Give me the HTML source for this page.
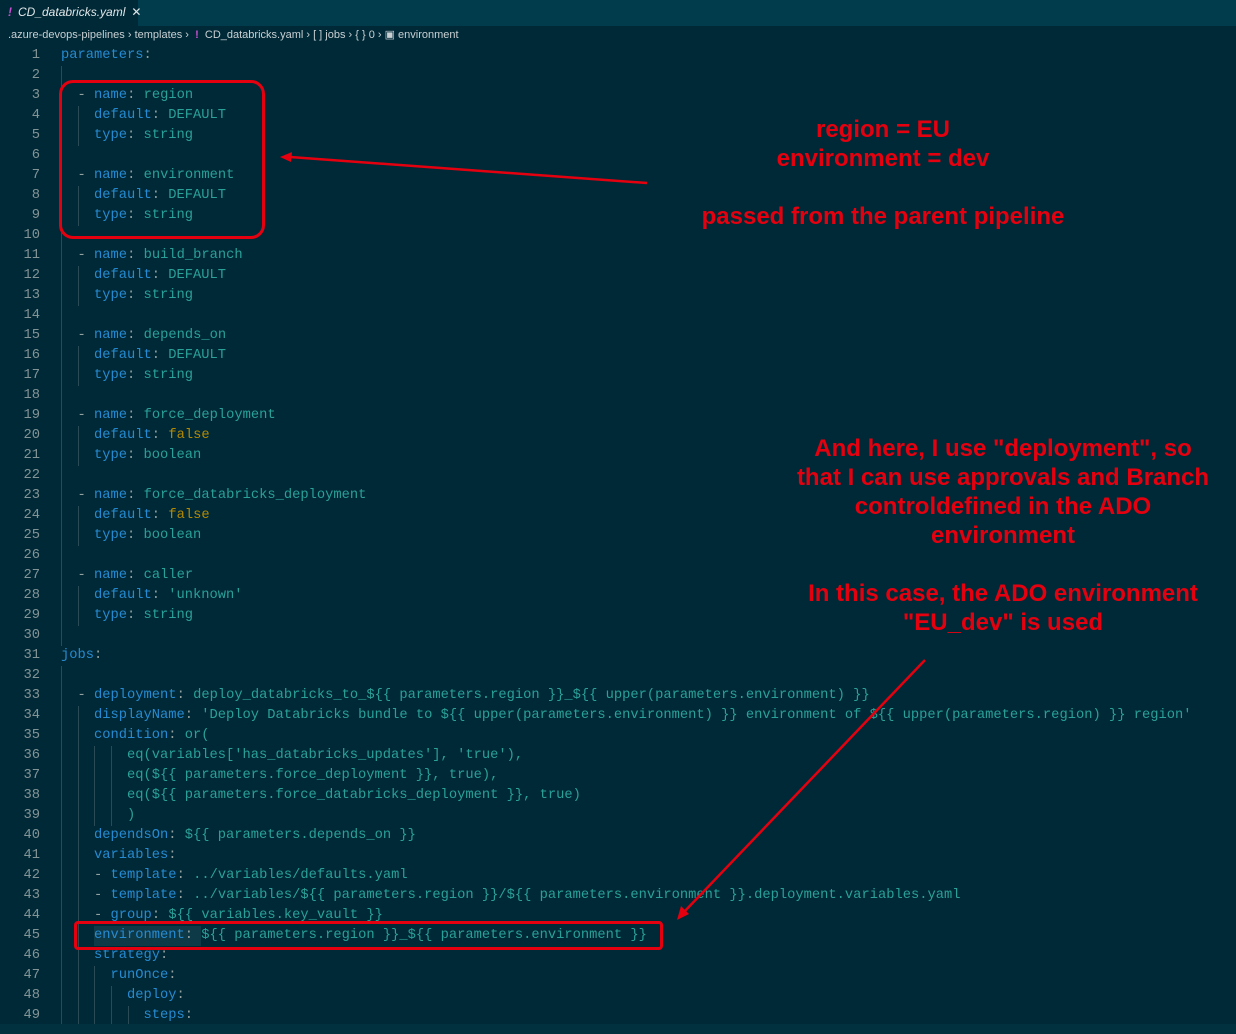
<!DOCTYPE html>
<html><head><meta charset="utf-8"><style>
body{margin:0;width:1236px;height:1034px;background:#002937;overflow:hidden;position:relative;font-family:"Liberation Mono",monospace}
.tabbar{position:absolute;left:0;top:0;width:1236px;height:26px;background:#003c4c}
.tab{position:absolute;left:0;top:0;width:138px;height:26px;background:#002937;font:italic 12px "Liberation Sans",sans-serif;color:#e0e6e8;line-height:25px;white-space:nowrap}
.bc{position:absolute;left:8px;top:27px;font:11px "Liberation Sans",sans-serif;color:#c8d0d3;line-height:16px;white-space:pre}
.ln{position:absolute;left:0;width:40px;text-align:right;color:#839496;font-size:13.8px;line-height:20px}
.cd{position:absolute;left:61px;white-space:pre;font-size:13.75px;line-height:20px;color:#2aa198}
.k{color:#268bd2}.p{color:#93a1a1}.y{color:#b58900}
.g{position:absolute;width:1px;background:#2a4a55}
.ann{position:absolute;color:#e4000f;font:bold 24px "Liberation Sans",sans-serif;text-align:center;line-height:29px;white-space:pre}
#c{position:absolute;left:0;top:2px;width:1236px;height:1022px}
</style></head><body>
<div class="tabbar"><div class="tab"><span style="color:#c84fd0;font-weight:bold;margin:0 6px 0 8px">!</span>CD_databricks.yaml<span style="font-style:normal;margin-left:6px">✕</span></div></div>
<div class="bc">.azure-devops-pipelines › templates ›  <span style="color:#c84fd0;font-weight:bold">!</span>  CD_databricks.yaml › [ ] jobs › { } 0 › ▣ environment</div>

<div id="c">
<div class="g" style="left:61px;top:64px;height:580px"></div>
<div class="g" style="left:61px;top:664px;height:360px"></div>
<div class="g" style="left:78px;top:104px;height:40px"></div>
<div class="g" style="left:78px;top:184px;height:40px"></div>
<div class="g" style="left:78px;top:264px;height:40px"></div>
<div class="g" style="left:78px;top:344px;height:40px"></div>
<div class="g" style="left:78px;top:424px;height:40px"></div>
<div class="g" style="left:78px;top:504px;height:40px"></div>
<div class="g" style="left:78px;top:584px;height:40px"></div>
<div class="g" style="left:78px;top:704px;height:320px"></div>
<div class="g" style="left:94px;top:744px;height:80px"></div>
<div class="g" style="left:94px;top:964px;height:60px"></div>
<div class="g" style="left:111px;top:744px;height:80px"></div>
<div class="g" style="left:111px;top:984px;height:40px"></div>
<div class="g" style="left:128px;top:1004px;height:20px"></div>
<div style="position:absolute;left:94px;top:924px;width:107px;height:20px;background:#0e3a48"></div>

<div class="ln" style="top:44px">1</div><div class="cd" style="top:44px"><span class="k">parameters</span><span class="p">:</span></div>
<div class="ln" style="top:64px">2</div>
<div class="ln" style="top:84px">3</div><div class="cd" style="top:84px">  <span class="p">-</span> <span class="k">name</span><span class="p">:</span> region</div>
<div class="ln" style="top:104px">4</div><div class="cd" style="top:104px">    <span class="k">default</span><span class="p">:</span> DEFAULT</div>
<div class="ln" style="top:124px">5</div><div class="cd" style="top:124px">    <span class="k">type</span><span class="p">:</span> string</div>
<div class="ln" style="top:144px">6</div>
<div class="ln" style="top:164px">7</div><div class="cd" style="top:164px">  <span class="p">-</span> <span class="k">name</span><span class="p">:</span> environment</div>
<div class="ln" style="top:184px">8</div><div class="cd" style="top:184px">    <span class="k">default</span><span class="p">:</span> DEFAULT</div>
<div class="ln" style="top:204px">9</div><div class="cd" style="top:204px">    <span class="k">type</span><span class="p">:</span> string</div>
<div class="ln" style="top:224px">10</div>
<div class="ln" style="top:244px">11</div><div class="cd" style="top:244px">  <span class="p">-</span> <span class="k">name</span><span class="p">:</span> build_branch</div>
<div class="ln" style="top:264px">12</div><div class="cd" style="top:264px">    <span class="k">default</span><span class="p">:</span> DEFAULT</div>
<div class="ln" style="top:284px">13</div><div class="cd" style="top:284px">    <span class="k">type</span><span class="p">:</span> string</div>
<div class="ln" style="top:304px">14</div>
<div class="ln" style="top:324px">15</div><div class="cd" style="top:324px">  <span class="p">-</span> <span class="k">name</span><span class="p">:</span> depends_on</div>
<div class="ln" style="top:344px">16</div><div class="cd" style="top:344px">    <span class="k">default</span><span class="p">:</span> DEFAULT</div>
<div class="ln" style="top:364px">17</div><div class="cd" style="top:364px">    <span class="k">type</span><span class="p">:</span> string</div>
<div class="ln" style="top:384px">18</div>
<div class="ln" style="top:404px">19</div><div class="cd" style="top:404px">  <span class="p">-</span> <span class="k">name</span><span class="p">:</span> force_deployment</div>
<div class="ln" style="top:424px">20</div><div class="cd" style="top:424px">    <span class="k">default</span><span class="p">:</span> <span class="y">false</span></div>
<div class="ln" style="top:444px">21</div><div class="cd" style="top:444px">    <span class="k">type</span><span class="p">:</span> boolean</div>
<div class="ln" style="top:464px">22</div>
<div class="ln" style="top:484px">23</div><div class="cd" style="top:484px">  <span class="p">-</span> <span class="k">name</span><span class="p">:</span> force_databricks_deployment</div>
<div class="ln" style="top:504px">24</div><div class="cd" style="top:504px">    <span class="k">default</span><span class="p">:</span> <span class="y">false</span></div>
<div class="ln" style="top:524px">25</div><div class="cd" style="top:524px">    <span class="k">type</span><span class="p">:</span> boolean</div>
<div class="ln" style="top:544px">26</div>
<div class="ln" style="top:564px">27</div><div class="cd" style="top:564px">  <span class="p">-</span> <span class="k">name</span><span class="p">:</span> caller</div>
<div class="ln" style="top:584px">28</div><div class="cd" style="top:584px">    <span class="k">default</span><span class="p">:</span> 'unknown'</div>
<div class="ln" style="top:604px">29</div><div class="cd" style="top:604px">    <span class="k">type</span><span class="p">:</span> string</div>
<div class="ln" style="top:624px">30</div>
<div class="ln" style="top:644px">31</div><div class="cd" style="top:644px"><span class="k">jobs</span><span class="p">:</span></div>
<div class="ln" style="top:664px">32</div>
<div class="ln" style="top:684px">33</div><div class="cd" style="top:684px">  <span class="p">-</span> <span class="k">deployment</span><span class="p">:</span> deploy_databricks_to_${{ parameters.region }}_${{ upper(parameters.environment) }}</div>
<div class="ln" style="top:704px">34</div><div class="cd" style="top:704px">    <span class="k">displayName</span><span class="p">:</span> 'Deploy Databricks bundle to ${{ upper(parameters.environment) }} environment of ${{ upper(parameters.region) }} region'</div>
<div class="ln" style="top:724px">35</div><div class="cd" style="top:724px">    <span class="k">condition</span><span class="p">:</span> or(</div>
<div class="ln" style="top:744px">36</div><div class="cd" style="top:744px">        eq(variables['has_databricks_updates'], 'true'),</div>
<div class="ln" style="top:764px">37</div><div class="cd" style="top:764px">        eq(${{ parameters.force_deployment }}, true),</div>
<div class="ln" style="top:784px">38</div><div class="cd" style="top:784px">        eq(${{ parameters.force_databricks_deployment }}, true)</div>
<div class="ln" style="top:804px">39</div><div class="cd" style="top:804px">        )</div>
<div class="ln" style="top:824px">40</div><div class="cd" style="top:824px">    <span class="k">dependsOn</span><span class="p">:</span> ${{ parameters.depends_on }}</div>
<div class="ln" style="top:844px">41</div><div class="cd" style="top:844px">    <span class="k">variables</span><span class="p">:</span></div>
<div class="ln" style="top:864px">42</div><div class="cd" style="top:864px">    <span class="p">-</span> <span class="k">template</span><span class="p">:</span> ../variables/defaults.yaml</div>
<div class="ln" style="top:884px">43</div><div class="cd" style="top:884px">    <span class="p">-</span> <span class="k">template</span><span class="p">:</span> ../variables/${{ parameters.region }}/${{ parameters.environment }}.deployment.variables.yaml</div>
<div class="ln" style="top:904px">44</div><div class="cd" style="top:904px">    <span class="p">-</span> <span class="k">group</span><span class="p">:</span> ${{ variables.key_vault }}</div>
<div class="ln" style="top:924px">45</div><div class="cd" style="top:924px">    <span class="k">environment</span><span class="p">:</span> ${{ parameters.region }}_${{ parameters.environment }}</div>
<div class="ln" style="top:944px">46</div><div class="cd" style="top:944px">    <span class="k">strategy</span><span class="p">:</span></div>
<div class="ln" style="top:964px">47</div><div class="cd" style="top:964px">      <span class="k">runOnce</span><span class="p">:</span></div>
<div class="ln" style="top:984px">48</div><div class="cd" style="top:984px">        <span class="k">deploy</span><span class="p">:</span></div>
<div class="ln" style="top:1004px">49</div><div class="cd" style="top:1004px">          <span class="k">steps</span><span class="p">:</span></div>
</div>
<div style="position:absolute;left:0;top:1024px;width:1236px;height:10px;background:#01303e"></div>

<div style="position:absolute;left:59px;top:80px;width:200px;height:153px;border:3px solid #e4000f;border-radius:14px"></div>
<div style="position:absolute;left:74px;top:921px;width:583px;height:23px;border:3px solid #e4000f;border-radius:4px"></div>
<svg style="position:absolute;left:0;top:0" width="1236" height="1034">
<line x1="647" y1="183" x2="290" y2="157" stroke="#e4000f" stroke-width="2.5"/>
<polygon points="280,157 292,152 291,162" fill="#e4000f"/>
<line x1="925" y1="660" x2="684" y2="912" stroke="#e4000f" stroke-width="2.5"/>
<polygon points="677,920 681,906 689,914" fill="#e4000f"/>
</svg>

<div class="ann" style="left:633px;top:115px;width:500px">region = EU
environment = dev

passed from the parent pipeline</div>
<div class="ann" style="left:753px;top:434px;width:500px">And here, I use "deployment", so
that I can use approvals and Branch
controldefined in the ADO
environment

In this case, the ADO environment
"EU_dev" is used</div>
</body></html>
